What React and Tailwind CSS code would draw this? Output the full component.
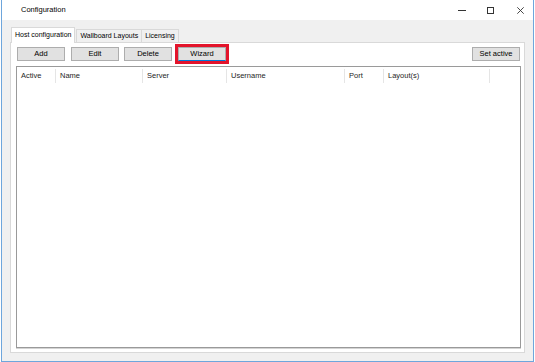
import React from 'react';

const columns = [
  { name: 'Active', width: 39 },
  { name: 'Name', width: 87 },
  { name: 'Server', width: 84 },
  { name: 'Username', width: 118 },
  { name: 'Port', width: 39 },
  { name: 'Layout(s)', width: 106 },
];

function WinButton({ children, className = '' }) {
  return (
    <div
      className={`h-[14px] w-[48px] flex items-center justify-center bg-[#e1e1e1] border border-[#adadad] text-[7.5px] text-black leading-none ${className}`}
    >
      {children}
    </div>
  );
}

export default function App() {
  return (
    <div
      className="w-[535px] h-[362px] bg-white pl-[1px] overflow-hidden"
      style={{ fontFamily: '"Liberation Sans", Arial, sans-serif' }}
    >
      <div className="w-[533px] h-[362px] border-x border-b border-[#6ea6dc] flex flex-col">
        {/* title bar */}
        <div className="h-[20px] bg-white flex items-center shrink-0">
          <span className="pl-[19px] text-[7.5px] text-black">Configuration</span>
          <div className="ml-auto flex items-center h-full pr-[9px]">
            <div className="w-[8px] h-px bg-[#333] mt-[1px]" />
            <div className="ml-[21px] w-[7px] h-[7px] border border-[#333]" />
            <svg className="ml-[23px]" width="7" height="7" viewBox="0 0 7 7">
              <path d="M0.3 0.3 L6.7 6.7 M6.7 0.3 L0.3 6.7" stroke="#333" strokeWidth="0.9" fill="none" />
            </svg>
          </div>
        </div>

        {/* client area */}
        <div className="flex-1 bg-[#f0f0f0] pt-[7px] px-[8px] pb-[8px] flex flex-col">
          {/* tabs */}
          <div className="flex items-end pl-[1px] h-[15px] shrink-0 relative z-10">
            <div className="h-[16px] -mb-px px-[3px] bg-white border border-b-0 border-[#d9d9d9] flex items-center text-[7px] text-black">
              Host configuration
            </div>
            <div className="h-[13px] px-[3px] ml-[1px] bg-[#f0f0f0] border border-b-0 border-[#d9d9d9] flex items-center text-[7px] text-black">
              Wallboard Layouts
            </div>
            <div className="h-[13px] px-[3px] bg-[#f0f0f0] border border-b-0 border-l-0 border-[#d9d9d9] flex items-center text-[7px] text-black">
              Licensing
            </div>
          </div>

          {/* tab panel */}
          <div className="flex-1 bg-white border border-[#d9d9d9] pt-[4px] pl-[5px] pr-[3px] pb-[4px] flex flex-col">
            <div className="flex items-center pl-[1px] pr-[1px] shrink-0">
              <WinButton className="w-[47px]">Add</WinButton>
              <WinButton className="ml-[6px]">Edit</WinButton>
              <WinButton className="ml-[5px]">Delete</WinButton>
              <WinButton className="ml-[6px] border-b-[#0078d7] outline-[3px] outline-solid outline-[#e3142b]">
                Wizard
              </WinButton>
              <WinButton className="ml-auto">Set active</WinButton>
            </div>

            <div className="mt-[5px] flex-1 bg-white border border-[#9a9a9a] shadow-[0_1px_0_#d4d4d4]">
              <div className="flex h-[17px] items-center">
                {columns.map((c) => (
                  <div
                    key={c.name}
                    className="h-[14px] flex items-center pl-[4px] border-r border-[#e5e5e5] text-[7.5px] text-[#1e1e1e] shrink-0"
                    style={{ width: c.width }}
                  >
                    {c.name}
                  </div>
                ))}
              </div>
            </div>
          </div>
        </div>
      </div>
    </div>
  );
}
